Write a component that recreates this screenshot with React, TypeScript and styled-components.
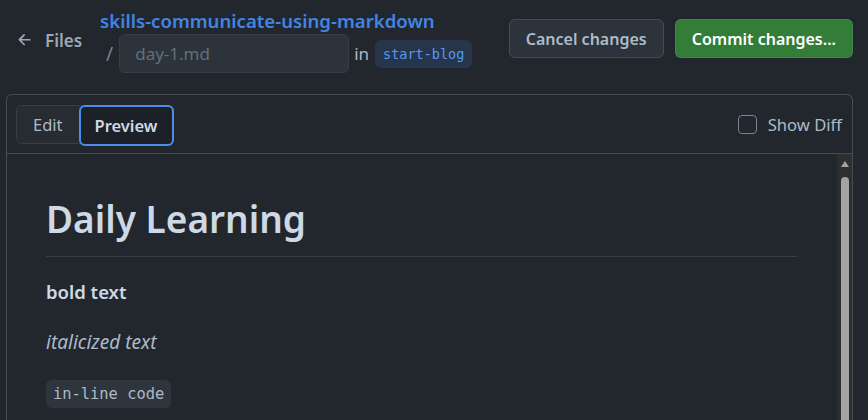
import React from 'react';
import styled, { createGlobalStyle } from 'styled-components';

const GlobalStyle = createGlobalStyle`
  html, body { margin: 0; padding: 0; background: #22272e; }
  body {
    font-family: "Noto Sans", "Open Sans", sans-serif;
    color: #adbac7;
    width: 868px;
    height: 420px;
    overflow: hidden;
  }
  * { box-sizing: border-box; }
`;

const Page = styled.div`
  display: flex;
  flex-direction: column;
  height: 420px;
  padding: 0 15px 0 6px;
`;

const TopBar = styled.header`
  display: flex;
  align-items: center;
  height: 80px;
  padding-left: 10px;
  margin-bottom: 14px;
`;

const BackLink = styled.a`
  display: flex;
  align-items: center;
  gap: 11px;
  color: #9ea7b3;
  font-weight: 600;
  font-size: 17px;
  text-decoration: none;
  margin-right: 20px;
  svg { display: block; }
`;

const TitleBlock = styled.div`
  display: flex;
  flex-direction: column;
`;

const RepoTitle = styled.a`
  color: #4184e4;
  font-weight: 600;
  font-size: 18.6px;
  line-height: 27px;
  text-decoration: none;
  white-space: nowrap;
  margin-left: -2px;
`;

const PathRow = styled.div`
  display: flex;
  align-items: center;
  height: 39px;
  padding-left: 4px;
`;

const Slash = styled.span`
  color: #768390;
  font-size: 19px;
  margin-right: 6px;
`;

const FileInput = styled.input`
  width: 230px;
  height: 39px;
  background: #2d333b;
  border: 1px solid #373e47;
  border-radius: 6px;
  padding: 0 15px;
  font-family: inherit;
  font-size: 17px;
  color: #adbac7;
  outline: none;
  &::placeholder { color: #636e7b; }
`;

const InWord = styled.span`
  font-size: 17px;
  color: #adbac7;
  margin: 0 6px 0 5px;
`;

const BranchBadge = styled.span`
  display: inline-flex;
  align-items: center;
  height: 28px;
  padding: 0 8px;
  border-radius: 6px;
  background: #26354a;
  color: #539bf5;
  font-family: "DejaVu Sans Mono", "Liberation Mono", monospace;
  font-size: 13.5px;
`;

const Actions = styled.div`
  display: flex;
  gap: 11px;
  margin-left: auto;
  align-self: flex-start;
  margin-top: 19px;
`;

const Button = styled.button<{ $primary?: boolean }>`
  height: 39px;
  padding: 0 16px;
  border-radius: 6px;
  font-family: inherit;
  font-size: 16px;
  font-weight: 600;
  cursor: pointer;
  border: 1px solid ${p => (p.$primary ? 'rgba(205,217,229,0.1)' : '#444c56')};
  background: ${p => (p.$primary ? '#347d39' : '#2d333b')};
  color: ${p => (p.$primary ? '#ffffff' : '#adbac7')};
`;

const Panel = styled.section`
  flex: 1;
  display: flex;
  flex-direction: column;
  border: 1px solid #444c56;
  border-bottom: none;
  border-radius: 6px 6px 0 0;
  overflow: hidden;
  min-height: 0;
`;

const PanelHeader = styled.div`
  display: flex;
  align-items: center;
  justify-content: space-between;
  height: 59px;
  padding: 0 10px 0 9px;
  border-bottom: 1px solid #444c56;
  flex-shrink: 0;
`;

const TabGroup = styled.div`
  display: flex;
  height: 39px;
  border: 1px solid #373e47;
  border-radius: 6px;
  background: #272c33;
`;

const Tab = styled.button<{ $active?: boolean }>`
  height: ${p => (p.$active ? '41px' : '37px')};
  margin: ${p => (p.$active ? '-1px -1px -1px 0' : '0')};
  padding: 0 ${p => (p.$active ? '14px' : '16px')};
  border-radius: 6px;
  border: ${p => (p.$active ? '2px solid #4a8ee9' : 'none')};
  background: ${p => (p.$active ? '#1c2128' : 'transparent')};
  color: ${p => (p.$active ? '#cdd9e5' : '#adbac7')};
  font-family: inherit;
  font-size: 16.5px;
  font-weight: ${p => (p.$active ? 600 : 400)};
  cursor: pointer;
`;

const DiffToggle = styled.label`
  display: flex;
  align-items: center;
  gap: 11px;
  font-size: 16.6px;
  color: #adbac7;
`;

const CheckBox = styled.span`
  width: 19px;
  height: 19px;
  border: 1px solid #768390;
  border-radius: 4px;
  background: #22272e;
`;

const ContentRow = styled.div`
  flex: 1;
  display: flex;
  min-height: 0;
`;

const MarkdownBody = styled.article`
  flex: 1;
  padding: 40px 40px 0 39px;
  overflow: hidden;
  font-size: 18.5px;
  line-height: 30px;
`;

const Heading = styled.h1`
  margin: 0 0 20px;
  padding-bottom: 12px;
  font-size: 37px;
  line-height: 50px;
  font-weight: 600;
  color: #cdd9e5;
  border-bottom: 1px solid #373e47;
`;

const Para = styled.p`
  margin: 0 0 20px;
  color: #adbac7;
`;

const Strong = styled.strong`
  font-weight: 600;
  color: #cdd9e5;
`;

const Em = styled.em`
  font-style: italic;
  font-size: 19px;
`;

const InlineCode = styled.code`
  font-family: "DejaVu Sans Mono", "Liberation Mono", monospace;
  font-size: 15.4px;
  padding: 5px 7px;
  border-radius: 6px;
  background: #2f353d;
  color: #adbac7;
`;

const ScrollTrack = styled.div`
  width: 15px;
  display: flex;
  flex-direction: column;
  align-items: center;
  background: #2e2e2e;
  padding-top: 7px;
`;

const ScrollArrow = styled.span`
  width: 0;
  height: 0;
  border-left: 4px solid transparent;
  border-right: 4px solid transparent;
  border-bottom: 6px solid #a3a3a3;
`;

const ScrollThumb = styled.span`
  flex: 1;
  width: 8px;
  margin-top: 10px;
  border-radius: 4px 4px 0 0;
  background: #a3a3a3;
`;

const ArrowLeftIcon = () => (
  <svg width="18" height="18" viewBox="0 0 16 16" fill="#9ea7b3" aria-hidden>
    <path d="M7.78 12.53a.75.75 0 0 1-1.06 0L2.47 8.28a.75.75 0 0 1 0-1.06l4.25-4.25a.751.751 0 0 1 1.042.018.751.751 0 0 1 .018 1.042L4.81 7h7.44a.75.75 0 0 1 0 1.5H4.81l2.97 2.97a.75.75 0 0 1 0 1.06Z" />
  </svg>
);

export default function App() {
  return (
    <>
      <GlobalStyle />
      <Page>
        <TopBar>
          <BackLink href="#">
            <ArrowLeftIcon />
            Files
          </BackLink>
          <TitleBlock>
            <RepoTitle href="#">skills-communicate-using-markdown</RepoTitle>
            <PathRow>
              <Slash>/</Slash>
              <FileInput placeholder="day-1.md" />
              <InWord>in</InWord>
              <BranchBadge>start-blog</BranchBadge>
            </PathRow>
          </TitleBlock>
          <Actions>
            <Button>Cancel changes</Button>
            <Button $primary>Commit changes...</Button>
          </Actions>
        </TopBar>
        <Panel>
          <PanelHeader>
            <TabGroup>
              <Tab>Edit</Tab>
              <Tab $active>Preview</Tab>
            </TabGroup>
            <DiffToggle>
              <CheckBox />
              Show Diff
            </DiffToggle>
          </PanelHeader>
          <ContentRow>
            <MarkdownBody>
              <Heading>Daily Learning</Heading>
              <Para><Strong>bold text</Strong></Para>
              <Para><Em>italicized text</Em></Para>
              <Para><InlineCode>in-line code</InlineCode></Para>
            </MarkdownBody>
            <ScrollTrack>
              <ScrollArrow />
              <ScrollThumb />
            </ScrollTrack>
          </ContentRow>
        </Panel>
      </Page>
    </>
  );
}
